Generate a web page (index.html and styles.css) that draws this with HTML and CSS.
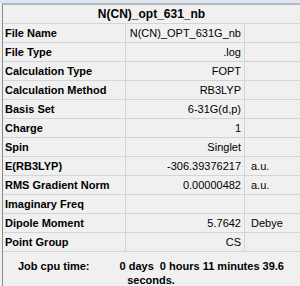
FILE: index.html
```html
<!DOCTYPE html>
<html lang="en">
<head>
  <meta charset="UTF-8">
  <title>Summary</title>
  <link rel="stylesheet" href="styles.css">
</head>
<body>

<div class="frame">
  <div class="panel">
    <div class="title">N(CN)_opt_631_nb</div>

    <div class="summary">
      <div class="row"><div class="label">File Name</div><div class="value">N(CN)_OPT_631G_nb</div><div class="unit"></div></div>
      <div class="row"><div class="label">File Type</div><div class="value">.log</div><div class="unit"></div></div>
      <div class="row"><div class="label">Calculation Type</div><div class="value">FOPT</div><div class="unit"></div></div>
      <div class="row"><div class="label">Calculation Method</div><div class="value">RB3LYP</div><div class="unit"></div></div>
      <div class="row"><div class="label">Basis Set</div><div class="value">6-31G(d,p)</div><div class="unit"></div></div>
      <div class="row"><div class="label">Charge</div><div class="value">1</div><div class="unit"></div></div>
      <div class="row"><div class="label">Spin</div><div class="value">Singlet</div><div class="unit"></div></div>
      <div class="row"><div class="label">E(RB3LYP)</div><div class="value">-306.39376217</div><div class="unit">a.u.</div></div>
      <div class="row"><div class="label">RMS Gradient Norm</div><div class="value">0.00000482</div><div class="unit">a.u.</div></div>
      <div class="row"><div class="label">Imaginary Freq</div><div class="value"></div><div class="unit"></div></div>
      <div class="row"><div class="label">Dipole Moment</div><div class="value">5.7642</div><div class="unit">Debye</div></div>
      <div class="row"><div class="label">Point Group</div><div class="value">CS</div><div class="unit"></div></div>
    </div>

    <div class="cpu-time">
      <span class="cpu-label">Job cpu time:</span>0 days&nbsp; 0 hours 11 minutes 39.6 seconds.
    </div>
  </div>
</div>

</body>
</html>
```

FILE: styles.css
```css
body {
  margin: 0;
  font-family: "Liberation Sans", Arial, sans-serif;
  font-size: 11px;
  color: #000;
  background: #f0f0f0;
}

.frame {
  height: 286px;
  border-top: 3px solid #dbe5f3;
  overflow: hidden;
}

.panel {
  margin-left: 2px;
  height: 100%;
  border-top: 2px solid #b9b9b9;
  border-left: 1px solid #8a8a8a;
  background: #f0f0f0;
}

.title {
  height: 18px;
  line-height: 18px;
  text-align: center;
  font-weight: bold;
  font-size: 12px;
  border-bottom: 1px solid #d4d4d4;
}

.row {
  display: grid;
  grid-template-columns: 123px 119px 1fr;
  height: 18px;
  line-height: 18px;
  border-bottom: 1px solid #d4d4d4;
}

.label {
  padding-left: 2px;
  font-weight: bold;
  border-right: 1px solid #d4d4d4;
  white-space: nowrap;
}

.value {
  padding-right: 3px;
  text-align: right;
  border-right: 1px solid #d4d4d4;
  white-space: nowrap;
}

.unit {
  padding-left: 6px;
}

.cpu-time {
  padding: 7px 12px 0 11px;
  text-align: center;
  font-weight: bold;
  line-height: 14px;
}

.cpu-label {
  margin-right: 30px;
}
```
